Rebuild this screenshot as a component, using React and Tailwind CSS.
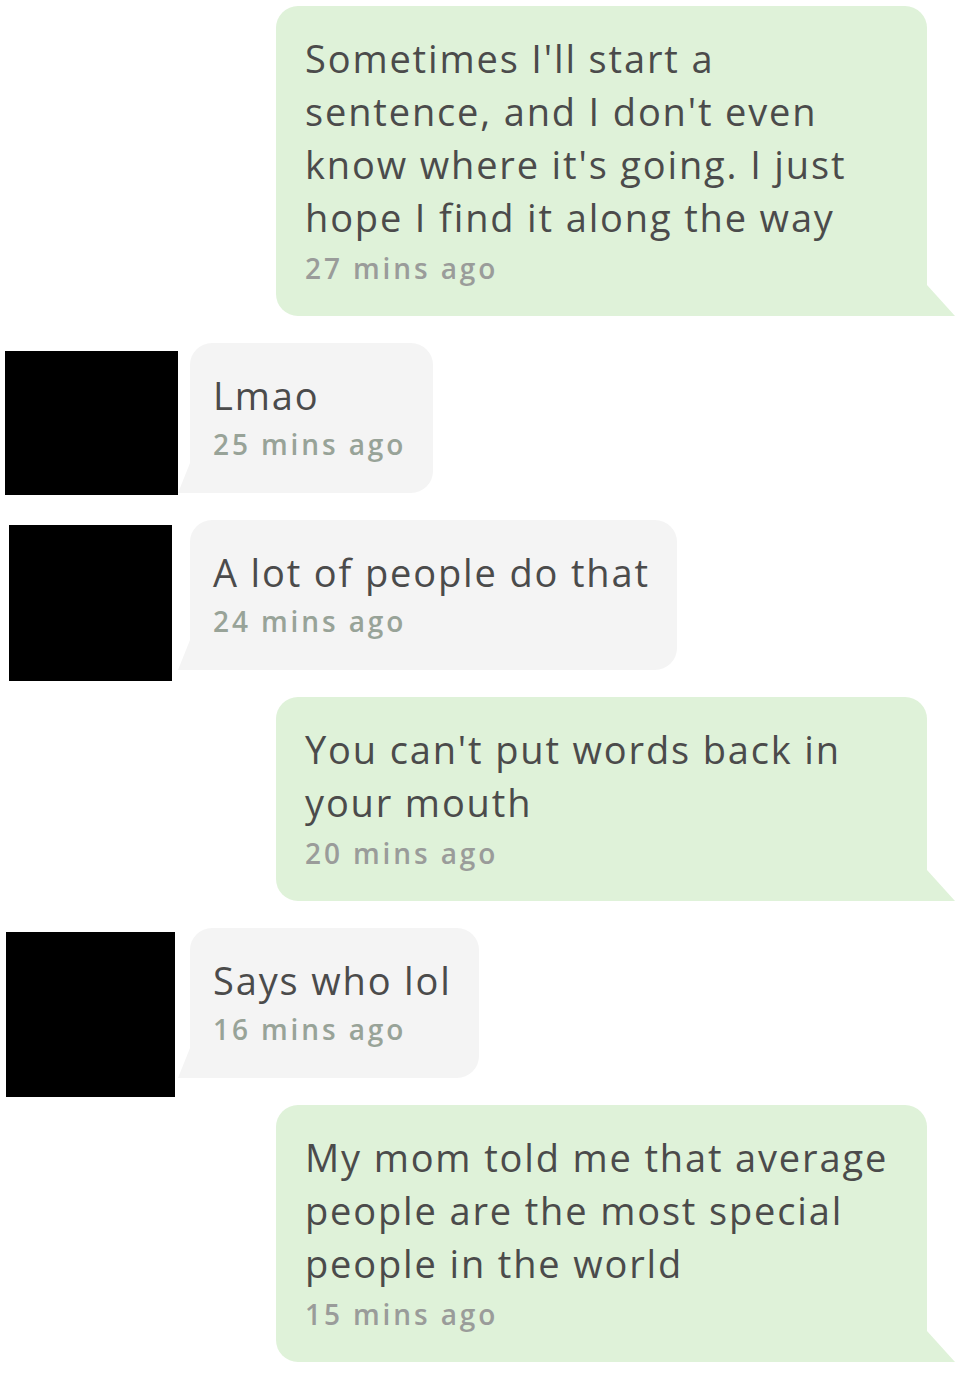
import React from "react";

function GreenBubble({ lines, time }) {
  return (
    <div className="flex justify-start pl-[276px]">
      <div className="relative w-[651px] bg-[#dff2d9] rounded-[22px] rounded-br-none pt-[26px] pb-[28px] pl-[29px] pr-[20px]">
        <div className="text-[38px] leading-[53px] text-[#4b4b4b] tracking-[1.85px]">
          {lines.map((l, i) => (
            <div key={i} className="whitespace-nowrap">{l}</div>
          ))}
        </div>
        <div className="mt-[4px] text-[28px] leading-[40px] text-[#9a9c9a] font-semibold tracking-[2.9px]">{time}</div>
        <svg className="absolute right-[-28px] bottom-0" width="28" height="31" viewBox="0 0 28 31">
          <polygon points="0,0 28,31 0,31" fill="#dff2d9" />
        </svg>
      </div>
    </div>
  );
}

function GrayBubble({ text, time, avatar }) {
  return (
    <div className="flex items-start">
      <div
        className="bg-black shrink-0"
        style={{ marginLeft: avatar.ml, width: avatar.w, height: avatar.h, marginTop: avatar.mt, marginBottom: -40 }}
      />
      <div className="relative bg-[#f4f4f4] rounded-[22px] rounded-bl-none pt-[26px] pb-[29px] pl-[23px] pr-[27px]" style={{ marginLeft: avatar.gap }}>
        <div className="text-[38px] leading-[53px] text-[#4b4b4b] tracking-[1.85px] whitespace-nowrap">{text}</div>
        <div className="mt-[2px] text-[28px] leading-[40px] text-[#98a398] font-semibold tracking-[2.9px] whitespace-nowrap">{time}</div>
        <svg className="absolute left-[-12px] bottom-0" width="12" height="30" viewBox="0 0 12 30">
          <polygon points="12,0 0,30 12,30" fill="#f4f4f4" />
        </svg>
      </div>
    </div>
  );
}

export default function App() {
  return (
    <div className="w-[980px] h-[1385px] bg-white overflow-hidden pt-[6px]" style={{ fontFamily: "'Open Sans', Lato, sans-serif" }}>
      <div className="flex flex-col gap-[27px]">
        <GreenBubble
          lines={["Sometimes I'll start a", "sentence, and I don't even", "know where it's going. I just", "hope I find it along the way"]}
          time="27 mins ago"
        />
        <GrayBubble text="Lmao" time="25 mins ago" avatar={{ ml: 5, w: 173, h: 144, mt: 8, gap: 12 }} />
        <GrayBubble text="A lot of people do that" time="24 mins ago" avatar={{ ml: 9, w: 163, h: 156, mt: 5, gap: 18 }} />
        <GreenBubble lines={["You can't put words back in", "your mouth"]} time="20 mins ago" />
        <GrayBubble text="Says who lol" time="16 mins ago" avatar={{ ml: 6, w: 169, h: 165, mt: 4, gap: 15 }} />
        <GreenBubble
          lines={["My mom told me that average", "people are the most special", "people in the world"]}
          time="15 mins ago"
        />
      </div>
    </div>
  );
}
